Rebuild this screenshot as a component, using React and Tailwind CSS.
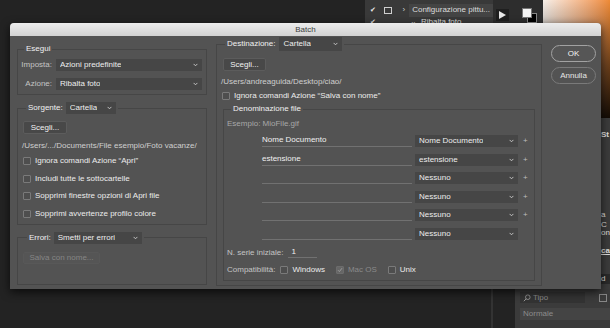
import React from 'react';

const FONT = "font-['Liberation_Sans',Arial,sans-serif]";

function Chevron() {
  return (
    <svg width="5" height="4" viewBox="0 0 5 4" className="shrink-0">
      <path d="M0.6 0.9 L2.5 2.8 L4.4 0.9" fill="none" stroke="#cfcfcf" strokeWidth="0.9" />
    </svg>
  );
}

function Select({ children, className = '' }) {
  return (
    <div className={`flex items-center justify-between bg-[#464646] pl-[4px] pr-[4px] text-[#ededed] ${className}`}>
      <span className="truncate">{children}</span>
      <Chevron />
    </div>
  );
}

function Check({ checked, disabled }) {
  return (
    <span
      className={`flex h-[8px] w-[8px] shrink-0 items-center justify-center rounded-[1px] border ${
        disabled ? 'border-[#6c6c6c] bg-[#666]' : 'border-[#7a7a7a] bg-[#4e4e4e]'
      }`}
    >
      {checked && (
        <svg width="6" height="6" viewBox="0 0 6 6">
          <path d="M1 3.2 L2.4 4.6 L5 1.2" fill="none" stroke="#9a9a9a" strokeWidth="1" />
        </svg>
      )}
    </span>
  );
}

function CheckRow({ label, checked, disabled }) {
  return (
    <div className="flex h-[10px] items-center gap-[4px]">
      <Check checked={checked} disabled={disabled} />
      <span className={disabled ? 'text-[#8a8a8a]' : 'text-[#ececec]'}>{label}</span>
    </div>
  );
}

function Button({ children, className = '' }) {
  return (
    <div className={`flex items-center justify-center rounded-[2px] border border-[#5c5c5c] bg-[#484848] ${className}`}>
      {children}
    </div>
  );
}

const naming = [
  ['Nome Documento', 'Nome Documento', true],
  ['estensione', 'estensione', true],
  ['', 'Nessuno', true],
  ['', 'Nessuno', true],
  ['', 'Nessuno', true],
  ['', 'Nessuno', false],
];

function BatchDialog() {
  return (
    <div className="absolute left-[10px] top-[23px] z-10 flex h-[266px] w-[591px] flex-col overflow-hidden rounded-t-[4px] bg-[#535353] shadow-[0_3px_10px_rgba(0,0,0,0.7)]">
      {/* title bar */}
      <div className="flex h-[13px] shrink-0 items-center justify-center bg-gradient-to-b from-[#ececec] to-[#d2d2d2] text-[8px] leading-[13px] text-[#3c3c3c]">
        Batch
      </div>

      <div className="flex pl-[7px] pr-[5px] text-[8px] leading-[10px]">
        {/* left column */}
        <div className="flex w-[190px] flex-col">
          <fieldset className="mt-[8px] border border-[#464646] pb-[4px]">
            <legend className="ml-[6px] px-[2px] text-[#f0f0f0]">Esegui</legend>
            <div className="mt-[5px] flex h-[12px] items-center">
              <span className="w-[34px] text-right text-[#c4c4c4]">Imposta:</span>
              <Select className="ml-[4px] h-[12px] w-[146px]">Azioni predefinite</Select>
            </div>
            <div className="mt-[7px] flex h-[12px] items-center">
              <span className="w-[34px] text-right text-[#c4c4c4]">Azione:</span>
              <Select className="ml-[4px] h-[12px] w-[146px]">Ribalta foto</Select>
            </div>
          </fieldset>

          <fieldset className="mt-[7px] border border-[#464646] pb-[5px] pl-[5px]">
            <legend className="ml-[3px] flex h-[12px] items-center px-[2px]">
              <span className="text-[#f0f0f0]">Sorgente:</span>
              <Select className="ml-[3px] h-[12px] w-[50px]">Cartella</Select>
            </legend>
            <Button className="mt-[7px] h-[13px] w-[44px] text-[#f2f2f2]">Scegli...</Button>
            <div className="-ml-[1px] mt-[7px] text-[#cfcfcf]">/Users/.../Documents/File esempio/Foto vacanze/</div>
            <div className="mt-[5px] flex flex-col gap-[7.5px]">
              <CheckRow label={'Ignora comandi Azione \u201cApri\u201d'} />
              <CheckRow label="Includi tutte le sottocartelle" />
              <CheckRow label="Sopprimi finestre opzioni di Apri file" />
              <CheckRow label="Sopprimi avvertenze profilo colore" />
            </div>
          </fieldset>

          <fieldset className="mt-[7px] border border-[#464646] pb-[20px] pl-[5px]">
            <legend className="ml-[4px] flex h-[12px] items-center px-[2px]">
              <span className="text-[#f0f0f0]">Errori:</span>
              <Select className="ml-[3px] h-[12px] w-[88px]">Smetti per errori</Select>
            </legend>
            <div className="mt-[8px] flex h-[12px] w-[77px] items-center justify-center rounded-[2px] border border-[#585858] bg-[#555] text-[#858585]">
              Salva con nome...
            </div>
          </fieldset>
        </div>

        {/* right panel */}
        <fieldset className="ml-[9px] mt-[1px] w-[326px] border border-[#464646] pb-[4px] pl-[6px] pr-[6px]">
          <legend className="ml-[2px] flex h-[14px] items-center px-[2px]">
            <span className="text-[#f0f0f0]">Destinazione:</span>
            <Select className="ml-[4px] h-[14px] w-[63px]">Cartella</Select>
          </legend>
          <Button className="mt-[7px] h-[13px] w-[43px] text-[#f2f2f2]">Scegli...</Button>
          <div className="-ml-[2px] mt-[6px] text-[#cfcfcf]">/Users/andreaguida/Desktop/ciao/</div>
          <div className="-ml-[1px] mt-[4px]">
            <CheckRow label={'Ignora comandi Azione \u201cSalva con nome\u201d'} />
          </div>

          <fieldset className="mt-[3px] border border-[#464646] pb-[5px] pl-[3px]">
            <legend className="ml-[4px] px-[2px] text-[#f0f0f0]">Denominazione file</legend>
            <div className="mt-[5px] text-[#a8a8a8]">Esempio: MioFile.gif</div>
            <div className="mt-[6px] flex flex-col gap-[6.6px]">
              {naming.map(([text, sel, plus], i) => (
                <div key={i} className="flex h-[12px] items-center">
                  <div className="ml-[35px] h-[12px] w-[150px] border-b border-[#717171] text-[#f0f0f0]">{text}</div>
                  <Select className="ml-[3px] h-[12px] w-[103px]">{sel}</Select>
                  {plus && <span className="ml-[5px] text-[#bdbdbd]">+</span>}
                </div>
              ))}
            </div>
            <div className="mt-[8px] flex h-[10px] items-center">
              <span className="text-[#c4c4c4]">N. serie iniziale:</span>
              <div className="ml-[5px] h-[11px] w-[29px] border-b border-[#717171] pl-[3px] text-[#f0f0f0]">1</div>
            </div>
            <div className="mt-[7px] flex h-[10px] items-center">
              <span className="text-[#c4c4c4]">Compatibilità:</span>
              <div className="ml-[5px]"><CheckRow label="Windows" /></div>
              <div className="ml-[11px]"><CheckRow label="Mac OS" checked disabled /></div>
              <div className="ml-[11px]"><CheckRow label="Unix" /></div>
            </div>
          </fieldset>
        </fieldset>

        {/* buttons */}
        <div className="ml-[9px] mt-[9px] flex w-[45px] flex-col gap-[5px]">
          <div className="flex h-[17px] items-center justify-center rounded-full border border-[#a2a2a2] bg-[#565656] text-[#f4f4f4]">OK</div>
          <div className="flex h-[17px] items-center justify-center rounded-full border border-[#7a7a7a] bg-[#535353] text-[#e6e6e6]">Annulla</div>
        </div>
      </div>
    </div>
  );
}

function Backdrop() {
  return (
    <>
      {/* actions panel behind the dialog */}
      <div className="absolute left-[365px] top-0 flex h-[30px] w-[128px] flex-col whitespace-nowrap bg-[#393939] text-[8px] leading-[10px] text-[#dcdcdc]">
        <div className="mt-[3px] flex h-[14px] items-center">
          <span className="ml-[5px] w-[8px] text-[7px] text-[#e8e8e8]">✔</span>
          <span className="ml-[6px] h-[7px] w-[8px] shrink-0 border border-[#cfcfcf]" />
          <span className="ml-[11px] text-[#cfcfcf]">›</span>
          <span className="ml-[4px] flex h-[13px] items-center bg-[#444] px-[3px]">Configurazione pittu...</span>
        </div>
        <div className="flex h-[10px] items-center">
          <span className="ml-[5px] w-[8px] text-[7px]">✔</span>
          <span className="ml-[32px]">⌄</span>
          <span className="ml-[4px]">Ribalta foto</span>
        </div>
      </div>
      <div className="absolute left-[493px] top-0 flex h-[23px] w-[50px] bg-[#2d2d2d]">
        <div className="ml-[3px] mt-[9px] flex h-[12px] w-[13px] items-center justify-center bg-[#1f1f1f]">
          <svg width="7" height="8" viewBox="0 0 7 8"><path d="M0 0 L7 4 L0 8 Z" fill="#e8e8e8" /></svg>
        </div>
        <div className="relative ml-[13px] mt-[8px] h-[15px] w-[16px]">
          <span className="absolute left-[5px] top-[5px] h-[10px] w-[10px] border border-[#888] bg-black" />
          <span className="absolute left-0 top-0 h-[10px] w-[10px] border border-[#777] bg-[#f4f4f4]" />
        </div>
      </div>
      {/* colour picker */}
      <div className="absolute left-[543px] top-0 h-[130px] w-[67px] bg-gradient-to-r from-[#f6f0ea] to-[#ee8a35]">
        <div className="h-full w-full bg-gradient-to-b from-transparent via-[rgba(0,0,0,0.55)] to-black" />
      </div>
      {/* right dock strip */}
      <div className="absolute left-[601px] top-[118px] flex h-[210px] w-[9px] flex-col bg-[#3c3c3c] text-[8px] leading-[10px] text-[#e0e0e0]">
        <span className="mt-[12px] font-bold">St</span>
        <span className="mt-[70px]">a C</span>
        <span className="-mt-[2px]">on</span>
        <span className="mt-[8px] font-bold underline">ca</span>
        <span className="mt-[18px] bg-[#2a2a2a]">d</span>
      </div>
      {/* layers panel bottom right */}
      <div className="absolute left-[491px] top-[289px] h-[39px] w-[2px] bg-[#333]" />
      <div className="absolute left-[515px] top-[289px] flex h-[39px] w-[95px] flex-col bg-[#3b3b3b] text-[8px] leading-[10px] text-[#8c8c8c]">
        <div className="mt-[3px] flex items-center">
          <div className="ml-[5px] flex h-[11px] w-[65px] items-center bg-[#333] pl-[3px]">
            <svg width="8" height="8" viewBox="0 0 8 8"><circle cx="4.8" cy="3.2" r="2.3" fill="none" stroke="#999" strokeWidth="0.9" /><path d="M3.2 4.8 L0.8 7.2" stroke="#999" strokeWidth="1" /></svg>
            <span className="ml-[2px]">Tipo</span>
          </div>
          <span className="ml-[14px] h-[8px] w-[8px] border border-[#888]" />
        </div>
        <div className="ml-[5px] mt-[5px] flex h-[12px] w-[90px] items-center bg-[#444] pl-[3px]">Normale</div>
      </div>
    </>
  );
}

export default function App() {
  return (
    <div className={`relative h-[328px] w-[610px] overflow-hidden bg-[#232323] ${FONT}`}>
      <Backdrop />
      <BatchDialog />
    </div>
  );
}
